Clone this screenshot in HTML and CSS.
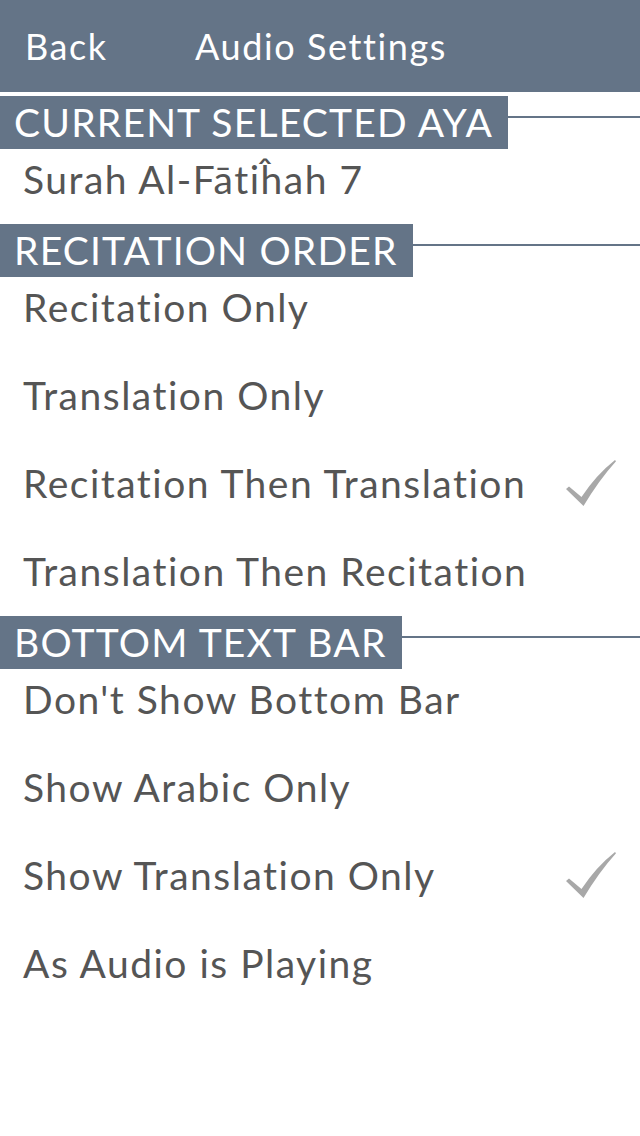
FILE: index.html
```html
<!DOCTYPE html>
<html>
<head>
<meta charset="utf-8">
<link rel="stylesheet" href="styles.css">
</head>
<body>
<header class="nav">
  <span class="nav-back">Back</span>
  <span class="nav-title">Audio Settings</span>
</header>

<section class="section">
  <div class="section-head"><span class="section-label">CURRENT SELECTED AYA</span><span class="section-rule"></span></div>
  <ul class="list">
    <li class="row">Surah Al-Fātiĥah 7</li>
  </ul>
</section>

<section class="section">
  <div class="section-head"><span class="section-label">RECITATION ORDER</span><span class="section-rule"></span></div>
  <ul class="list">
    <li class="row">Recitation Only</li>
    <li class="row">Translation Only</li>
    <li class="row">Recitation Then Translation<svg class="check" viewBox="0 0 50 46"><path d="M0 29 L3 26.5 L15.5 37 Q30 15 49 0 L50 1.2 Q33 20 17.5 46 Z"/></svg></li>
    <li class="row">Translation Then Recitation</li>
  </ul>
</section>

<section class="section">
  <div class="section-head"><span class="section-label">BOTTOM TEXT BAR</span><span class="section-rule"></span></div>
  <ul class="list">
    <li class="row">Don't Show Bottom Bar</li>
    <li class="row">Show Arabic Only</li>
    <li class="row">Show Translation Only<svg class="check" viewBox="0 0 50 46"><path d="M0 29 L3 26.5 L15.5 37 Q30 15 49 0 L50 1.2 Q33 20 17.5 46 Z"/></svg></li>
    <li class="row">As Audio is Playing</li>
  </ul>
</section>
</body>
</html>
```

FILE: styles.css
```css
html, body {
  margin: 0;
  padding: 0;
  background: #ffffff;
  font-family: "Lato", "Open Sans", sans-serif;
  font-variant-ligatures: none;
}

.nav {
  height: 92px;
  background: #647487;
  display: flex;
  align-items: center;
  color: #ffffff;
  font-size: 36px;
  letter-spacing: 1.6px;
  padding-left: 25px;
  box-sizing: border-box;
}

.nav-back {
  width: 170px;
}

.section {
  padding-top: 4px;
}

.section + .section {
  padding-top: 0;
}

.section-head {
  display: flex;
  align-items: flex-start;
  height: 53px;
}

.section-label {
  background: #647487;
  color: #ffffff;
  font-size: 39px;
  letter-spacing: 1.2px;
  line-height: 53px;
  height: 53px;
  padding: 0 15px 0 14px;
  white-space: nowrap;
}

.section-rule {
  flex: 1;
  height: 2px;
  margin-top: 20px;
  background: #647487;
}

.list {
  list-style: none;
  margin: 0;
  padding: 0 0 15px 0;
  display: flex;
  flex-direction: column;
  gap: 28px;
}

.row {
  height: 60px;
  line-height: 58px;
  font-size: 39px;
  letter-spacing: 1.5px;
  color: #555555;
  padding-left: 23px;
  padding-right: 24px;
  display: flex;
  align-items: center;
  justify-content: space-between;
}

.check {
  width: 50px;
  height: 46px;
  fill: #a8a8a8;
}
```
